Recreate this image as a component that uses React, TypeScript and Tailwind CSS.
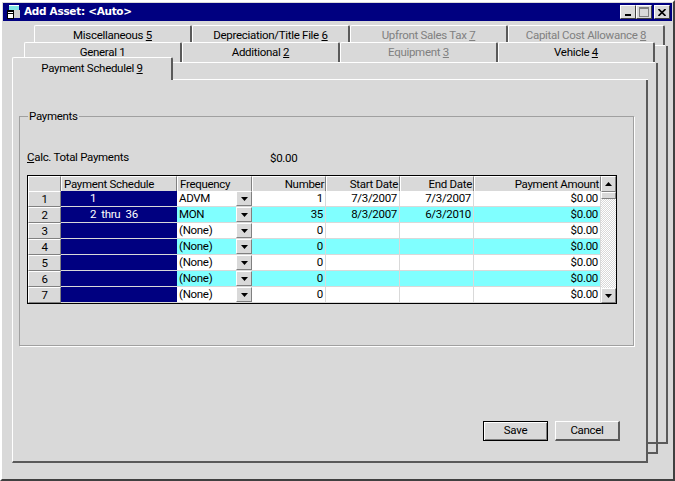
const sans = "font-['Roboto',Arial,sans-serif]";

function Tab({ label, hot, disabled, front }: { label: string; hot: string; disabled?: boolean; front?: boolean }) {
  return (
    <div
      className={`flex h-full items-start justify-center rounded-t-[2px] border-t border-l border-t-white border-l-white border-r-2 border-r-[#5a5a5a] bg-[#d9d9d9] ${front ? "pt-[2px]" : "pt-px"} ${
        disabled ? "text-[#808080]" : "text-black"
      }`}
    >
      <span>
        {label} <span className="underline">{hot}</span>
      </span>
    </div>
  );
}

function Sheet({ className, tabs }: { className: string; tabs: React.ReactNode }) {
  return (
    <div className={`[grid-area:1/1] flex flex-col ${className}`}>
      <div className="grid h-[21px] w-[631px] shrink-0 grid-cols-[158px_158px_158px_157px] border-b border-white">{tabs}</div>
      <div className="flex-1 border-r-2 border-b-2 border-r-[#5a5a5a] border-b-[#5a5a5a]" />
    </div>
  );
}

function ArrowBtn({ dir = "down", className = "" }: { dir?: "up" | "down"; className?: string }) {
  return (
    <div className={`flex items-center justify-center border-t border-l border-t-white border-l-white border-r border-b border-r-[#808080] border-b-[#808080] bg-[#d9d9d9] ${className}`}>
      <svg width="7" height="4" viewBox="0 0 7 4">
        <path d={dir === "down" ? "M0 0h7L3.5 4z" : "M0 4h7L3.5 0z"} fill="#000" />
      </svg>
    </div>
  );
}

const rows = [
  { n: 1, sched: "1", freq: "ADVM", num: "1", start: "7/3/2007", end: "7/3/2007" },
  { n: 2, sched: "2  thru  36", freq: "MON", num: "35", start: "8/3/2007", end: "6/3/2010" },
  { n: 3, sched: "", freq: "(None)", num: "0", start: "", end: "" },
  { n: 4, sched: "", freq: "(None)", num: "0", start: "", end: "" },
  { n: 5, sched: "", freq: "(None)", num: "0", start: "", end: "" },
  { n: 6, sched: "", freq: "(None)", num: "0", start: "", end: "" },
  { n: 7, sched: "", freq: "(None)", num: "0", start: "", end: "" },
];

function HeadCell({ children, right }: { children?: React.ReactNode; right?: boolean }) {
  return (
    <div className={`flex items-center border-t border-l border-t-white border-l-white border-r border-r-[#808080] bg-[#d9d9d9] pt-px pr-px pl-[2px] leading-none ${right ? "justify-end" : ""}`}>
      {children}
    </div>
  );
}

function PaymentGrid() {
  return (
    <div className="flex h-[129px] w-[590px] border border-black text-black">
      <div className="grid flex-1 grid-cols-[33px_116px_75px_74px_74px_74px_127px] grid-rows-[15px_repeat(7,16px)]">
        <HeadCell />
        <HeadCell>Payment Schedule</HeadCell>
        <HeadCell>Frequency</HeadCell>
        <HeadCell right>Number</HeadCell>
        <HeadCell right>Start Date</HeadCell>
        <HeadCell right>End Date</HeadCell>
        <HeadCell right>Payment Amount</HeadCell>
        {rows.map((r) => {
          const bg = r.n % 2 === 0 ? "bg-[#80ffff]" : "bg-white";
          const cell = `flex items-center justify-end border-r border-b border-[#d9d9d9] pr-[2px] ${bg}`;
          return [
            <div key={`${r.n}h`} className="flex items-center justify-center border-t border-l border-t-white border-l-white border-r border-b border-r-[#808080] border-b-[#808080] bg-[#d9d9d9]">
              {r.n}
            </div>,
            <div key={`${r.n}s`} className="whitespace-pre border-b border-[#d9d9d9] bg-[#000080] pl-[29px] leading-[15px] text-white">
              {r.sched}
            </div>,
            <div key={`${r.n}f`} className={`flex items-center justify-between border-b border-[#d9d9d9] pl-[2px] ${bg}`}>
              {r.freq}
              <ArrowBtn className="h-[15px] w-[16px]" />
            </div>,
            <div key={`${r.n}n`} className={cell}>{r.num}</div>,
            <div key={`${r.n}a`} className={cell}>{r.start}</div>,
            <div key={`${r.n}e`} className={cell}>{r.end}</div>,
            <div key={`${r.n}p`} className={cell}>$0.00</div>,
          ];
        })}
      </div>
      <div className="flex w-[15px] flex-col bg-[repeating-conic-gradient(#ffffff_0_25%,#d9d9d9_0_50%)] bg-[length:2px_2px]">
        <ArrowBtn dir="up" className="h-[16px]" />
        <div className="h-[7px] border-t border-l border-t-white border-l-white border-r border-b border-r-[#808080] border-b-[#808080] bg-[#d9d9d9]" />
        <ArrowBtn className="mt-auto h-[15px]" />
      </div>
    </div>
  );
}

export default function App() {
  return (
    <div className={`flex h-[481px] w-[675px] flex-col border-t-2 border-l-2 border-t-white border-l-white border-r-2 border-b-2 border-r-[#404040] border-b-[#404040] bg-[#d9d9d9] p-px text-[11.5px] tracking-[-0.3px] ${sans}`}>
      <div className="flex h-[18px] shrink-0 items-center justify-between bg-[#000080] pr-[2px] pl-[3px]">
        <div className="flex items-center gap-[3px]">
          <svg width="15" height="15" viewBox="0 0 15 15">
            <path d="M3 0h10v5H3z" fill="#7fe5e5" />
            <path d="M3 0h10v1H3z" fill="#fff" />
            <path d="M8 5h6v8H8z" fill="#d0d0d0" />
            <path d="M1 5h7v9H1z" fill="#000" />
            <path d="M2 7h5v1H2zM2 9h5v4H2z" fill="#fff" />
          </svg>
          <span className="font-['DejaVu_Sans',sans-serif] text-[10.5px] font-bold tracking-[-0.3px] text-white">Add Asset: &lt;Auto&gt;</span>
        </div>
        <div className="flex">
          <div className="flex h-[14px] w-[16px] items-end border-t border-l border-t-white border-l-white border-r border-b border-r-[#404040] border-b-[#404040] bg-[#d9d9d9] pb-[2px] pl-[4px]">
            <div className="h-[2px] w-[6px] bg-black" />
          </div>
          <div className="flex h-[14px] w-[16px] items-center justify-center border-t border-l border-t-white border-l-white border-r border-b border-r-[#404040] border-b-[#404040] bg-[#d9d9d9]">
            <div className="h-[10px] w-[10px] border border-t-2 border-[#808080]" />
          </div>
          <div className="ml-[2px] flex h-[14px] w-[16px] items-center justify-center border-t border-l border-t-white border-l-white border-r border-b border-r-[#404040] border-b-[#404040] bg-[#d9d9d9]">
            <svg width="8" height="7" viewBox="0 0 8 7">
              <path d="M0.5 0L7.5 7M7.5 0L0.5 7" stroke="#000" strokeWidth="1.6" />
            </svg>
          </div>
        </div>
      </div>

      <div className="grid flex-1 grid-cols-1 grid-rows-1">
        <Sheet
          className="mt-[4px] mr-[4px] mb-[34px] ml-[31px]"
          tabs={
            <>
              <Tab label="Miscellaneous" hot="5" />
              <Tab label="Depreciation/Title File" hot="6" />
              <Tab label="Upfront Sales Tax" hot="7" disabled />
              <Tab label="Capital Cost Allowance" hot="8" disabled />
            </>
          }
        />
        <Sheet
          className="mt-[21px] mr-[14px] mb-[24px] ml-[21px]"
          tabs={
            <>
              <Tab label="General" hot="1" />
              <Tab label="Additional" hot="2" />
              <Tab label="Equipment" hot="3" disabled />
              <Tab label="Vehicle" hot="4" />
            </>
          }
        />
        <div className="[grid-area:1/1] mt-[36px] mr-[24px] mb-[15px] ml-[9px] flex flex-col">
          <div className="flex h-[23px] shrink-0">
            <div className="w-[161px]">
              <Tab label="Payment Schedulel" hot="9" front />
            </div>
            <div className="flex-1 border-b border-white" />
          </div>
          <div className="flex flex-1 flex-col border-r-2 border-b-2 border-l border-r-[#5a5a5a] border-b-[#5a5a5a] border-l-white bg-[#d9d9d9] pt-[28px] pr-[12px] pl-[6px] text-black">
            <fieldset className="h-[238px] border border-[#a0a0a0] pt-[24px] pl-[7px] shadow-[1px_1px_0_#fff]">
              <legend className="ml-[1px] px-[1px]">Payments</legend>
              <div className="flex h-[26px] items-start">
                <span className="w-[243px]">
                  <span className="underline">C</span>alc. Total Payments
                </span>
                <span className="pt-px">$0.00</span>
              </div>
              <PaymentGrid />
            </fieldset>
            <div className="mt-[75px] flex justify-end gap-[7px] pr-[14px]">
              <button className="h-[20px] w-[65px] border border-black bg-[#d9d9d9] shadow-[inset_1px_1px_0_#fff,inset_-1px_-1px_0_#808080]">Save</button>
              <button className="h-[20px] w-[65px] border-t border-l border-t-white border-l-white border-r-2 border-b-2 border-r-[#5a5a5a] border-b-[#5a5a5a] bg-[#d9d9d9]">Cancel</button>
            </div>
          </div>
        </div>
      </div>
    </div>
  );
}
